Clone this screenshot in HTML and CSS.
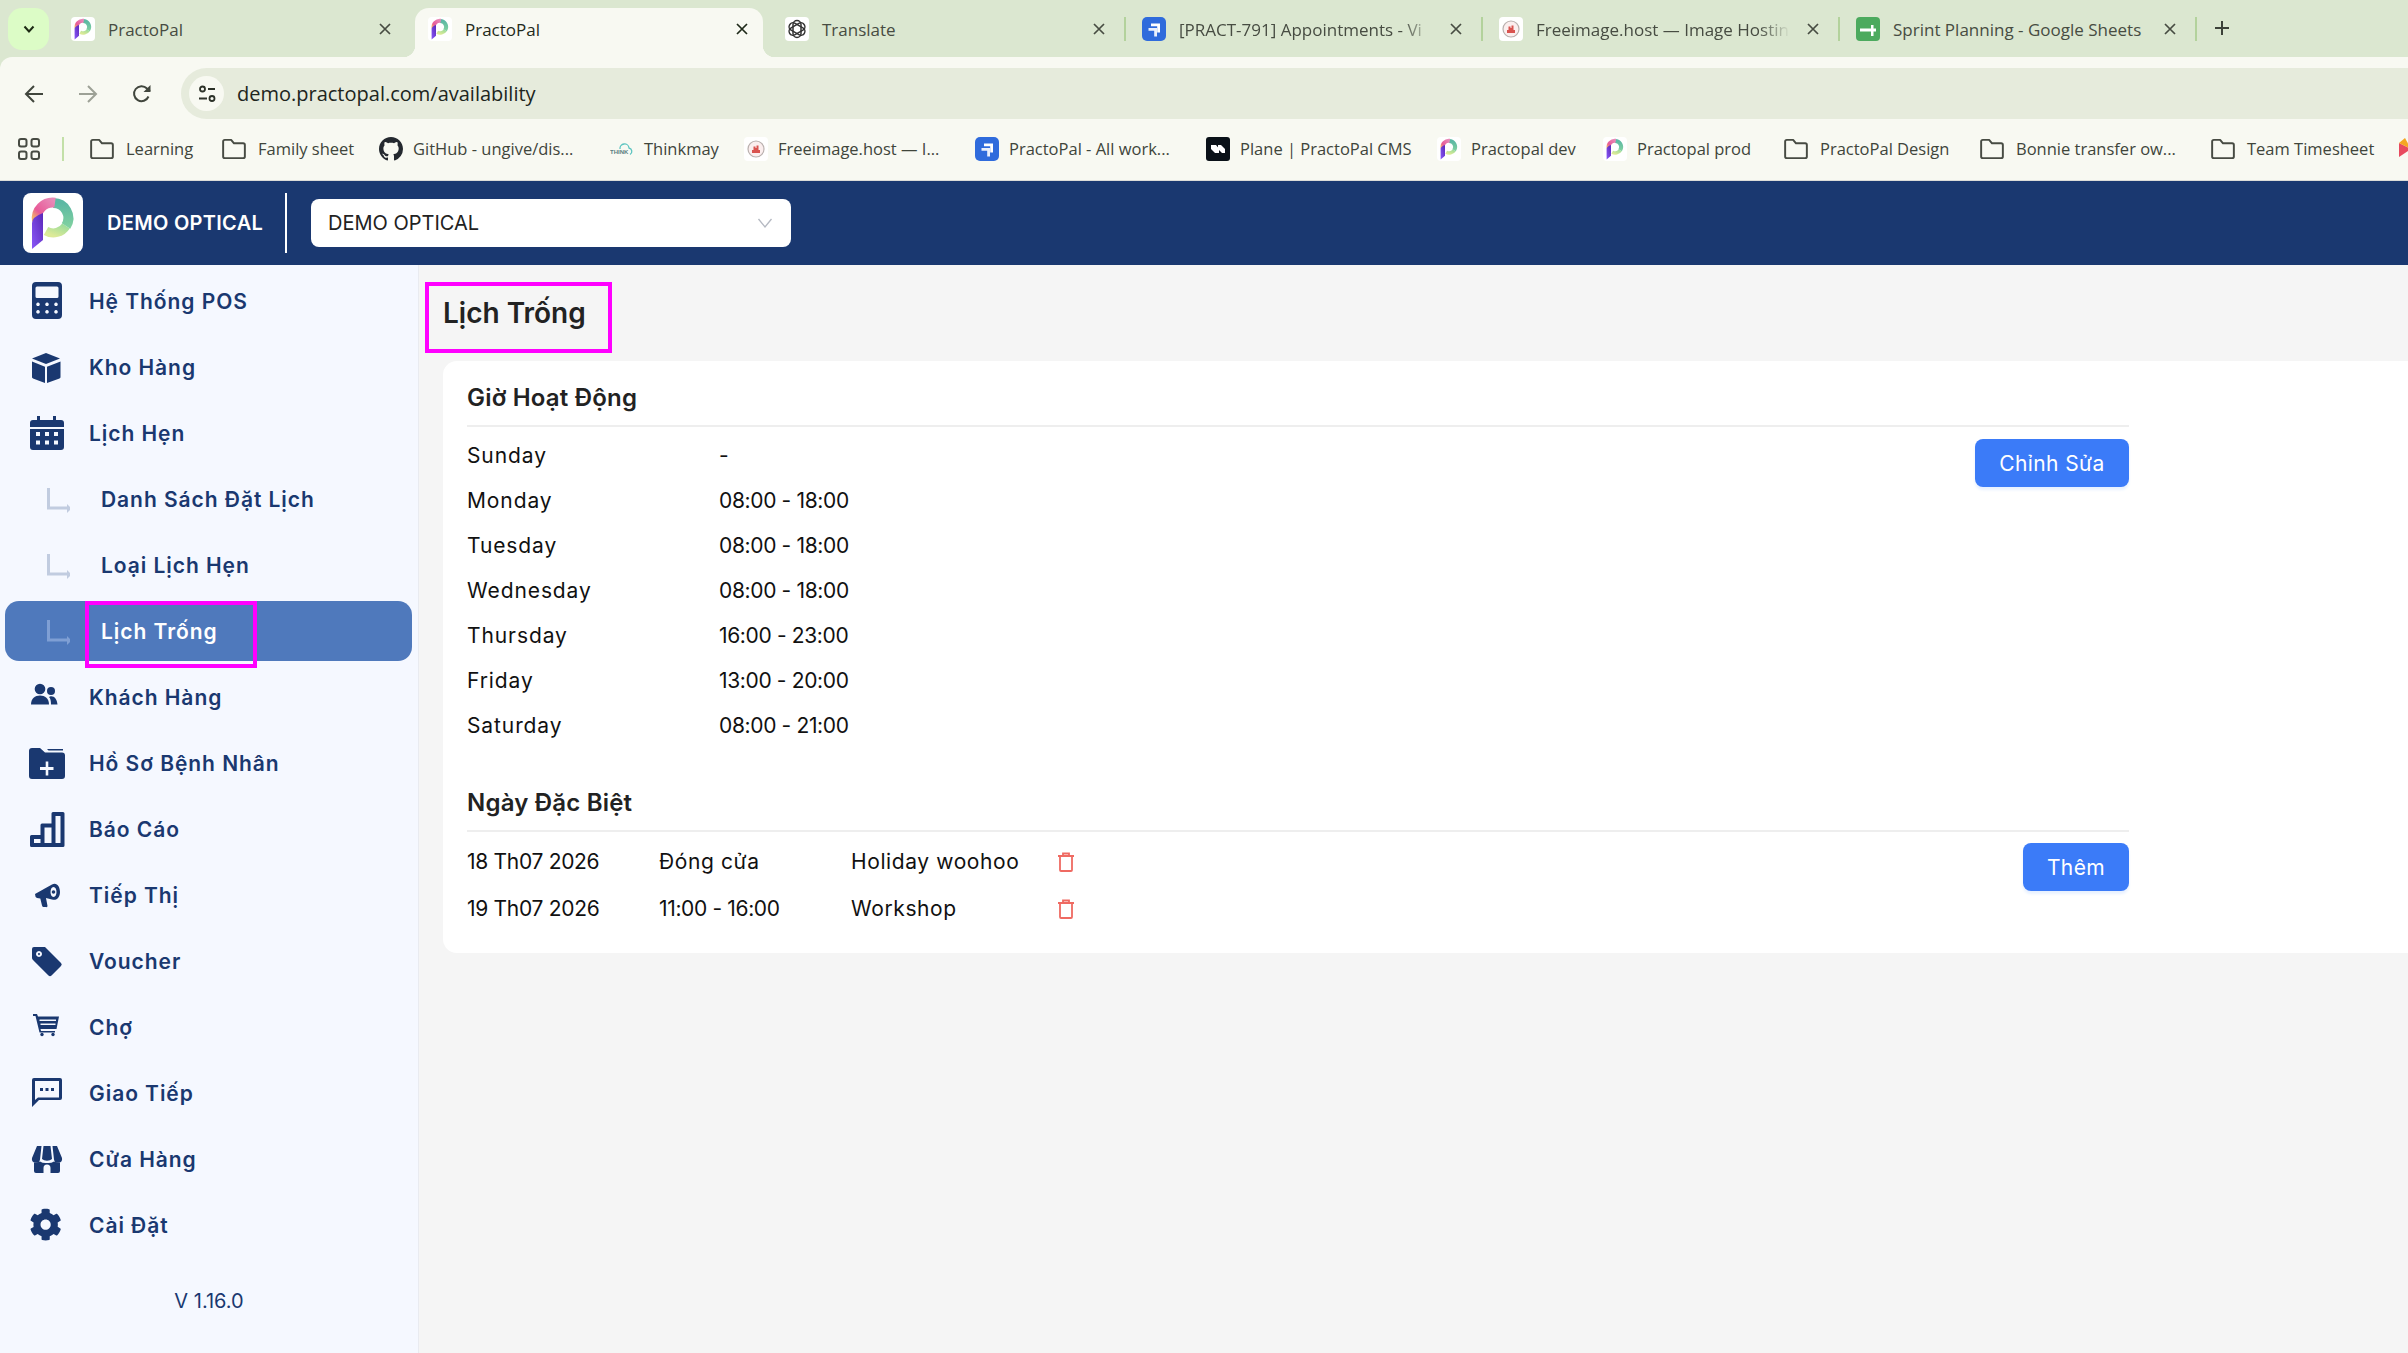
FILE: index.html
```html
<!DOCTYPE html>
<html lang="vi">
<head>
<meta charset="utf-8">
<title>PractoPal</title>
<link rel="stylesheet" href="styles.css">
</head>
<body>
<svg class="defs" width="0" height="0" aria-hidden="true">
  <defs>
    <linearGradient id="gPink" x1="0" y1="1" x2="1" y2="0"><stop offset="0" stop-color="#f3b06a"/><stop offset=".3" stop-color="#e85a98"/><stop offset="1" stop-color="#e88ab8"/></linearGradient>
    <linearGradient id="gTeal" x1="0" y1="0" x2="0" y2="1"><stop offset="0" stop-color="#5cb8a4"/><stop offset="1" stop-color="#7fd0a0"/></linearGradient>
    <linearGradient id="gLime" x1="1" y1="0" x2="0" y2="1"><stop offset="0" stop-color="#9ddc9a"/><stop offset="1" stop-color="#dcea98"/></linearGradient>
    <linearGradient id="gStem" x1="0" y1="1" x2="1" y2="0"><stop offset="0" stop-color="#8a58f8"/><stop offset="1" stop-color="#5a28b8"/></linearGradient>
    <symbol id="plogo" viewBox="0 0 60 60">
      <path d="M43 33A15 15 0 0 1 23 38" fill="none" stroke="url(#gLime)" stroke-width="9"/>
      <path d="M30 10A15 15 0 0 1 43 33" fill="none" stroke="url(#gTeal)" stroke-width="10"/>
      <path d="M14 28A16 16 0 0 1 32 9.6" fill="none" stroke="url(#gPink)" stroke-width="10"/>
      <path d="M9 56V30Q9 24 20 20V47Z" fill="url(#gStem)"/>
    </symbol>
    <symbol id="folder" viewBox="1.500 3.500 21 18">
      <path d="M2.500 6A1.500 1.500 0 0 1 4 4.500H9.500L12 7.500H20A1.500 1.500 0 0 1 21.500 9V19A1.500 1.500 0 0 1 20 20.500H4A1.500 1.500 0 0 1 2.500 19Z" fill="none" stroke="#474b43" stroke-width="1.700" stroke-linejoin="round"/>
    </symbol>
    <symbol id="jira" viewBox="0 0 24 24">
      <rect width="24" height="24" rx="5" fill="#2f6bdc"/>
      <path d="M9 6.500h9v9h-2.800V9.300H9Z" fill="#fff"/><path d="M6.500 11h8.500v8.500h-2.800v-5.700H6.500Z" fill="#fff" opacity=".9"/>
    </symbol>
    <symbol id="close" viewBox="0 0 14 14">
      <path d="M2 2L12 12M12 2L2 12" fill="none" stroke="currentColor" stroke-width="1.700"/>
    </symbol>
    <symbol id="arrow" viewBox="0 0 48 48">
      <path d="M26.500 13V33H46" fill="none" stroke="currentColor" stroke-width="3"/><path d="M45 29l4.500 4.500L45 38Z" fill="currentColor"/>
    </symbol>
    <symbol id="trash" viewBox="0 0 18 20">
      <path d="M1 4H17M6 4V1.500H12V4M3 4V18A1 1 0 0 0 4 19H14A1 1 0 0 0 15 18V4" fill="none" stroke="#ef6a62" stroke-width="1.800"/>
    </symbol>
  </defs>
</svg>

<div class="browser">
  <div class="tabstrip">
    <button class="tab-menu"><svg width="14" height="14" viewBox="0 0 14 14"><path d="M2.500 4.500L7 9.500l4.500-5" fill="none" stroke="#1d2a14" stroke-width="2"/></svg></button>
    <div class="tab"><span class="fav"><svg width="24" height="24"><use href="#plogo"/></svg></span><span class="tab-title">PractoPal</span><svg class="tab-x" width="14" height="14"><use href="#close"/></svg></div>
    <span class="tab-sep"></span>
    <div class="tab tab-active"><span class="fav"><svg width="24" height="24"><use href="#plogo"/></svg></span><span class="tab-title">PractoPal</span><svg class="tab-x" width="14" height="14"><use href="#close"/></svg></div>
    <span class="tab-sep"></span>
    <div class="tab"><span class="fav"><svg width="24" height="24" viewBox="0 0 24 24"><g fill="none" stroke="#333" stroke-width="1.500"><rect x="8" y="3.500" width="8" height="17" rx="4"/><rect x="8" y="3.500" width="8" height="17" rx="4" transform="rotate(60 12 12)"/><rect x="8" y="3.500" width="8" height="17" rx="4" transform="rotate(120 12 12)"/></g></svg></span><span class="tab-title">Translate</span><svg class="tab-x" width="14" height="14"><use href="#close"/></svg></div>
    <span class="tab-sep tab-sep-on"></span>
    <div class="tab"><svg class="fav-bare" width="24" height="24"><use href="#jira"/></svg><span class="tab-title tab-fade">[PRACT-791] Appointments - Vi</span><svg class="tab-x" width="14" height="14"><use href="#close"/></svg></div>
    <span class="tab-sep tab-sep-on"></span>
    <div class="tab"><span class="fav"><svg width="24" height="24" viewBox="0 0 24 24"><circle cx="12" cy="12" r="8" fill="#fbeeee" stroke="#b9b0ae" stroke-width="1.200"/><path d="M8 16h8v-3h-1.500V8.500h-2V11h-1V9.500H9.500V13H8Z" fill="#d9534f"/></svg></span><span class="tab-title tab-fade">Freeimage.host — Image Hostin</span><svg class="tab-x" width="14" height="14"><use href="#close"/></svg></div>
    <span class="tab-sep tab-sep-on"></span>
    <div class="tab"><svg class="fav-bare" width="24" height="24" viewBox="0 0 24 24"><rect width="24" height="24" rx="4" fill="#4caa5e"/><path d="M4 11.500h16v3H4ZM15 8h2.500v11H15Z" fill="#fff"/></svg><span class="tab-title">Sprint Planning - Google Sheets</span><svg class="tab-x" width="14" height="14"><use href="#close"/></svg></div>
    <span class="tab-sep tab-sep-on"></span>
    <svg class="tab-plus" width="16" height="16" viewBox="0 0 16 16"><path d="M8 1V15M1 8H15" fill="none" stroke="#3c4239" stroke-width="2"/></svg>
  </div>

  <div class="toolbar">
    <svg class="tool-ic" width="20" height="20" viewBox="0 0 20 20"><path d="M19 10H2M10 2l-8 8 8 8" fill="none" stroke="#41463d" stroke-width="2"/></svg>
    <svg class="tool-ic" width="20" height="20" viewBox="0 0 20 20"><path d="M1 10H18M10 2l8 8-8 8" fill="none" stroke="#9da196" stroke-width="2"/></svg>
    <svg class="tool-ic" width="20" height="20" viewBox="0 0 20 20"><path d="M16.500 12.500A7.500 7.500 0 1 1 15 4.500L18 7" fill="none" stroke="#41463d" stroke-width="2"/><path d="M18.500 1v7h-7Z" fill="#41463d"/></svg>
    <div class="omnibox">
      <span class="site-info"><svg width="20" height="20" viewBox="0 0 20 20"><g fill="none" stroke="#2c3128" stroke-width="1.800"><circle cx="5.500" cy="5" r="2.500"/><path d="M11 5h7M2 14.500h8"/><circle cx="15" cy="14.500" r="2.500"/></g></svg></span>
      <span class="url">demo.practopal.com/availability</span>
    </div>
  </div>

  <div class="bookmarks">
    <svg class="bm-apps" width="22" height="22" viewBox="0 0 22 22"><g fill="none" stroke="#474b43" stroke-width="2"><rect x="1" y="1" width="7.500" height="7.500" rx="2"/><rect x="13.500" y="1" width="7.500" height="7.500" rx="2"/><rect x="1" y="13.500" width="7.500" height="7.500" rx="2"/><rect x="13.500" y="13.500" width="7.500" height="7.500" rx="2"/></g></svg>
    <span class="bm-sep"></span>
    <div class="bm-list">
      <span class="bm bm-folder"><svg width="24" height="24"><use href="#folder"/></svg>Learning</span>
      <span class="bm bm-folder"><svg width="24" height="24"><use href="#folder"/></svg>Family sheet</span>
      <span class="bm"><svg width="24" height="24" viewBox="0 0 16 16"><path fill="#24292f" d="M8 0C3.580 0 0 3.580 0 8c0 3.540 2.290 6.530 5.470 7.590.4.070.55-.17.55-.38 0-.19-.01-.82-.01-1.490-2.010.37-2.530-.49-2.690-.94-.09-.23-.48-.94-.82-1.130-.28-.15-.68-.52-.01-.53.630-.01 1.080.58 1.230.82.720 1.210 1.870.87 2.330.66.070-.52.280-.87.510-1.070-1.780-.2-3.640-.89-3.640-3.950 0-.87.310-1.590.820-2.150-.08-.2-.36-1.020.08-2.120 0 0 .67-.21 2.200.82.640-.18 1.320-.27 2-.27s1.360.09 2 .27c1.530-1.040 2.200-.82 2.200-.82.440 1.100.160 1.920.080 2.120.510.560.820 1.270.820 2.150 0 3.070-1.870 3.750-3.650 3.950.290.250.540.730.540 1.480 0 1.070-.01 1.930-.01 2.200 0 .210.150.460.550.380A8.010 8.010 0 0 0 16 8c0-4.420-3.580-8-8-8Z"/></svg>GitHub - ungive/dis...</span>
      <span class="bm"><svg width="24" height="24" viewBox="0 0 24 24"><path d="M10 12a4.500 4.500 0 0 1 9-1 3.500 3.500 0 0 1 1 6.500" fill="none" stroke="#5cc4c0" stroke-width="1.300"/><text class="bm-think" x="0" y="17">THINK</text></svg>Thinkmay</span>
      <span class="bm"><span class="fav"><svg width="24" height="24" viewBox="0 0 24 24"><circle cx="12" cy="12" r="8" fill="#fbeeee" stroke="#b9b0ae" stroke-width="1.200"/><path d="M8 16h8v-3h-1.500V8.500h-2V11h-1V9.500H9.500V13H8Z" fill="#d9534f"/></svg></span>Freeimage.host — I...</span>
      <span class="bm"><svg width="24" height="24"><use href="#jira"/></svg>PractoPal - All work...</span>
      <span class="bm"><svg width="24" height="24" viewBox="0 0 24 24"><rect width="24" height="24" rx="3" fill="#0a1118"/><path d="M5 8h5l3 3.500V16H9l-4-4ZM12 8h3l4 4v4h-3l-4-4Z" fill="#fff"/></svg>Plane | PractoPal CMS</span>
      <span class="bm"><span class="fav"><svg width="24" height="24"><use href="#plogo"/></svg></span>Practopal dev</span>
      <span class="bm"><span class="fav"><svg width="24" height="24"><use href="#plogo"/></svg></span>Practopal prod</span>
      <span class="bm bm-folder"><svg width="24" height="24"><use href="#folder"/></svg>PractoPal Design</span>
      <span class="bm bm-folder"><svg width="24" height="24"><use href="#folder"/></svg>Bonnie transfer ow...</span>
      <span class="bm bm-folder"><svg width="24" height="24"><use href="#folder"/></svg>Team Timesheet</span>
      <span class="bm"><svg width="24" height="24" viewBox="0 0 24 24"><path d="M0 6l12 6-12 8Z" fill="#e84a5f"/><path d="M0 6l6-5 6 11Z" fill="#f5a623"/></svg></span>
    </div>
  </div>
</div>

<header class="app-header">
  <span class="logo"><svg width="60" height="60"><use href="#plogo"/></svg></span>
  <span class="brand">DEMO OPTICAL</span>
  <span class="divider"></span>
  <div class="select"><span class="select-text">DEMO OPTICAL</span><svg width="16" height="10" viewBox="0 0 16 10"><path d="M1.500 1L8 9l6.500-8" fill="none" stroke="#b5b9c2" stroke-width="1.300"/></svg></div>
</header>

<div class="app-body">
  <aside class="sidebar">
    <nav class="nav">
      <a class="nav-item"><svg class="nav-ic" width="48" height="48" viewBox="0 0 48 48"><path fill-rule="evenodd" d="M14 5H36A4 4 0 0 1 40 9V38A4 4 0 0 1 36 42H14A4 4 0 0 1 10 38V9A4 4 0 0 1 14 5ZM15 9.500A1.500 1.500 0 0 0 13.500 11V19.500A1.500 1.500 0 0 0 15 21H35A1.500 1.500 0 0 0 36.500 19.500V11A1.500 1.500 0 0 0 35 9.500ZM16 25.500a1.800 1.800 0 1 0 .01 0ZM25 25.500a1.800 1.800 0 1 0 .01 0ZM34 25.500a1.800 1.800 0 1 0 .01 0ZM16 33a1.800 1.800 0 1 0 .01 0ZM25 33a1.800 1.800 0 1 0 .01 0ZM34 33a1.800 1.800 0 1 0 .01 0Z"/></svg><span class="nav-label">Hệ Thống POS</span></a>
      <a class="nav-item"><svg class="nav-ic" width="48" height="48" viewBox="0 0 48 48"><path d="M24 10L38 15.500 24 21 10 15.500Z"/><path d="M10 18.500L23 23.700V40L11 35.500 10 34.500ZM38.500 18.500L25 23.700V40L37.500 35.500 38.500 34.500Z"/></svg><span class="nav-label">Kho Hàng</span></a>
      <a class="nav-item"><svg class="nav-ic" width="48" height="48" viewBox="0 0 48 48"><path fill-rule="evenodd" d="M15 7h3v4H31V7h3v4h5a3 3 0 0 1 3 3v4H8v-4a3 3 0 0 1 3-3h4ZM8 20H42V38a3 3 0 0 1-3 3H11a3 3 0 0 1-3-3ZM14 23v4h4v-4ZM23 23v4h4v-4ZM32 23v4h4v-4ZM14 31.500v4h4v-4ZM23 31.500v4h4v-4ZM32 31.500v4h4v-4Z"/></svg><span class="nav-label">Lịch Hẹn</span></a>
      <a class="nav-item nav-sub"><svg class="nav-ic" width="48" height="48"><use href="#arrow"/></svg><span class="nav-label">Danh Sách Đặt Lịch</span></a>
      <a class="nav-item nav-sub"><svg class="nav-ic" width="48" height="48"><use href="#arrow"/></svg><span class="nav-label">Loại Lịch Hẹn</span></a>
      <a class="nav-item nav-sub nav-active"><svg class="nav-ic" width="48" height="48"><use href="#arrow"/></svg><span class="nav-label">Lịch Trống</span><span class="mark-nav"></span></a>
      <a class="nav-item"><svg class="nav-ic" width="48" height="48" viewBox="0 0 48 48"><circle cx="18" cy="16" r="5.300"/><path d="M9 31.500C9 25.500 13 22.500 18 22.500S27 25.500 27 31.500Z"/><circle cx="29" cy="18" r="4"/><path d="M28 23.500C32 22.500 35 26 35.500 31.500H29C29 28 28.500 25.500 27 24Z"/></svg><span class="nav-label">Khách Hàng</span></a>
      <a class="nav-item"><svg class="nav-ic" width="48" height="48" viewBox="0 0 48 48"><path fill-rule="evenodd" d="M7 12A3 3 0 0 1 10 9H18L23 13.500H40A3 3 0 0 1 43 16.500V37A3 3 0 0 1 40 40H10A3 3 0 0 1 7 37ZM23.700 22.500V28H18V31H23.700V36.500H26.300V31H31.500V28H26.300V22.500Z"/><path d="M25 10H41V11.500H26.500Z"/></svg><span class="nav-label">Hồ Sơ Bệnh Nhân</span></a>
      <a class="nav-item"><svg class="nav-ic" width="48" height="48" viewBox="0 0 48 48"><path fill-rule="evenodd" d="M31 7H41A1.500 1.500 0 0 1 42.500 8.500V40.500A1.500 1.500 0 0 1 41 42H9.500A1.500 1.500 0 0 1 8 40.500V31.500A1.500 1.500 0 0 1 9.500 30H18.500V20A1.500 1.500 0 0 1 20 18.500H29.500V8.500A1.500 1.500 0 0 1 31 7ZM33.500 11V38H38.500V11ZM22.500 22.500V38H29.500V22.500ZM12 34V38H18.500V34Z"/></svg><span class="nav-label">Báo Cáo</span></a>
      <a class="nav-item"><svg class="nav-ic" width="48" height="48" viewBox="0 0 48 48"><path fill-rule="evenodd" d="M13 23L30 13.500C35 11 38 16 38 21S35 30 30 28.500L24 27 25.500 35Q25.500 36.500 24 36H21.500Q20.500 36 20 34.500L18.300 27.500 15 27Q13 26 13 23ZM31.500 16C29.500 16 28.500 18.500 28.500 21S29.500 26 31.500 26 34.500 23.500 34.500 21 33.500 16 31.500 16Z"/><circle cx="31.500" cy="21" r="1.800"/></svg><span class="nav-label">Tiếp Thị</span></a>
      <a class="nav-item"><svg class="nav-ic" width="48" height="48" viewBox="0 0 48 48"><path fill-rule="evenodd" d="M12 10H23L39 26Q40.500 27.500 39 29L29.500 38.500Q28 40 26.500 38.500L11 23Q10 22 10 21V12Q10 10 12 10ZM17 14a3 3 0 1 0 .01 0ZM17 16a1 1 0 1 1-.01 0Z"/></svg><span class="nav-label">Voucher</span></a>
      <a class="nav-item"><svg class="nav-ic" width="48" height="48" viewBox="0 0 48 48"><path fill-rule="evenodd" d="M11 11H15L16 13.500H37L34.500 26H18.500L19 28H33V29.500H17.500L13.500 13H11ZM17.500 16.500V18H34V16.500ZM18.500 20.500V22H33.500V20.500Z"/><circle cx="20" cy="31.500" r="1.700"/><circle cx="31" cy="31.500" r="1.700"/></svg><span class="nav-label">Chợ</span></a>
      <a class="nav-item"><svg class="nav-ic" width="48" height="48" viewBox="0 0 48 48"><path fill-rule="evenodd" d="M12 9H38A2 2 0 0 1 40 11V29A2 2 0 0 1 38 31H17L10 38V11A2 2 0 0 1 12 9ZM13 12V31L16 28.500H37V12Z"/><rect x="18" y="19" width="3" height="3"/><rect x="23.500" y="19" width="3" height="3"/><rect x="29" y="19" width="3" height="3"/></svg><span class="nav-label">Giao Tiếp</span></a>
      <a class="nav-item"><svg class="nav-ic" width="48" height="48" viewBox="0 0 48 48"><path d="M15 11H19.500L18 24.500A4 4 0 0 1 10 23ZM21.500 11H28.500L30 24A6 4 0 0 1 20 24ZM30.500 11H35L40 23A4 4 0 0 1 32 24.500Z"/><path fill-rule="evenodd" d="M12 27.500Q15 28 18 26.500 21 28.500 25 28 29 28.500 32 26.500 35 28 38 27.500V36A2 2 0 0 1 36 38H14A2 2 0 0 1 12 36ZM21.500 38H28.500V33A3.500 3.500 0 0 0 21.500 33Z"/></svg><span class="nav-label">Cửa Hàng</span></a>
      <a class="nav-item"><svg class="nav-ic" width="48" height="48" viewBox="0 0 512 512"><path transform="translate(78 78) scale(.68)" d="M487.400 315.700l-42.600-24.600c4.300-23.200 4.300-47 0-70.200l42.600-24.600c4.900-2.800 7.100-8.600 5.500-14-11.100-35.600-30-67.800-54.700-94.600-3.800-4.100-10-5.100-14.800-2.300L380.800 110c-17.900-15.400-38.500-27.300-60.800-35.100V25.800c0-5.600-3.900-10.500-9.400-11.700-36.700-8.200-74.300-7.800-109.200 0-5.500 1.200-9.400 6.100-9.400 11.700V75c-22.200 7.900-42.800 19.800-60.800 35.100L88.700 85.500c-4.900-2.800-11-1.900-14.800 2.300-24.700 26.700-43.600 58.900-54.700 94.600-1.700 5.400.6 11.200 5.500 14L67.300 221c-4.300 23.200-4.300 47 0 70.200l-42.600 24.600c-4.900 2.800-7.100 8.600-5.500 14 11.100 35.600 30 67.800 54.700 94.600 3.800 4.100 10 5.100 14.800 2.300l42.600-24.600c17.900 15.400 38.500 27.300 60.800 35.100v49.200c0 5.600 3.900 10.500 9.400 11.700 36.700 8.200 74.300 7.800 109.200 0 5.500-1.200 9.400-6.100 9.400-11.700v-49.200c22.200-7.900 42.800-19.800 60.800-35.100l42.600 24.600c4.900 2.800 11 1.900 14.800-2.300 24.700-26.700 43.600-58.900 54.700-94.600 1.500-5.500-.7-11.300-5.600-14.100zM256 336c-44.100 0-80-35.900-80-80s35.900-80 80-80 80 35.900 80 80-35.900 80-80 80z"/></svg><span class="nav-label">Cài Đặt</span></a>
    </nav>
    <div class="version">V 1.16.0</div>
  </aside>

  <main class="main">
    <div class="title-box"><h1 class="page-title">Lịch Trống</h1></div>
    <section class="card">
      <div class="card-inner">
        <h2 class="section-title">Giờ Hoạt Động</h2>
        <div class="section-body">
          <div class="hours">
            <div class="hours-row"><span class="day">Sunday</span><span class="time">-</span></div>
            <div class="hours-row"><span class="day">Monday</span><span class="time">08:00 - 18:00</span></div>
            <div class="hours-row"><span class="day">Tuesday</span><span class="time">08:00 - 18:00</span></div>
            <div class="hours-row"><span class="day">Wednesday</span><span class="time">08:00 - 18:00</span></div>
            <div class="hours-row"><span class="day">Thursday</span><span class="time">16:00 - 23:00</span></div>
            <div class="hours-row"><span class="day">Friday</span><span class="time">13:00 - 20:00</span></div>
            <div class="hours-row"><span class="day">Saturday</span><span class="time">08:00 - 21:00</span></div>
          </div>
          <button class="btn btn-edit">Chỉnh Sửa</button>
        </div>
        <h2 class="section-title section-second">Ngày Đặc Biệt</h2>
        <div class="section-body">
          <div class="special">
            <div class="special-row"><span class="sp-date">18 Th07 2026</span><span class="sp-word">Đóng cửa</span><span class="sp-word">Holiday woohoo</span><svg width="18" height="20"><use href="#trash"/></svg></div>
            <div class="special-row"><span class="sp-date">19 Th07 2026</span><span class="time">11:00 - 16:00</span><span class="sp-word">Workshop</span><svg width="18" height="20"><use href="#trash"/></svg></div>
          </div>
          <button class="btn btn-add">Thêm</button>
        </div>
      </div>
    </section>
  </main>
</div>
</body>
</html>
```
FILE: styles.css
```css
* { box-sizing: border-box; }
html, body { margin: 0; height: 100%; overflow: hidden; }
body {
  display: flex;
  flex-direction: column;
  background: #dbe7d0;
  font-family: "Inter", "Noto Sans", sans-serif;
  color: #111;
}
.defs { position: absolute; }

/* browser chrome */
.browser { font-family: "Open Sans", "Noto Sans", sans-serif; flex: none; }
.tabstrip {
  height: 57px;
  display: flex;
  align-items: flex-end;
  padding-left: 8px;
  background: #dbe7d0;
}
.tab-menu {
  width: 41px;
  height: 42px;
  margin: 0 9px 7px 0;
  padding: 0;
  border: 0;
  border-radius: 14px;
  background: #dcfcc6;
  display: flex;
  align-items: center;
  justify-content: center;
}
.tab {
  position: relative;
  width: 348px;
  height: 49px;
  flex: none;
  display: flex;
  align-items: center;
  padding: 0 14px 7px 13px;
  font-size: 17px;
  color: #474c42;
  border-radius: 14px 14px 0 0;
}
.tab-active { background: #f8f9f2; color: #1f2a1a; }
.tab-active::before, .tab-active::after {
  content: "";
  position: absolute;
  bottom: 0;
  width: 12px;
  height: 12px;
}
.tab-active::before { left: -12px; background: radial-gradient(circle at 0 0, transparent 12px, #f8f9f2 12.500px); }
.tab-active::after { right: -12px; background: radial-gradient(circle at 100% 0, transparent 12px, #f8f9f2 12.500px); }
.fav {
  width: 24px;
  height: 24px;
  flex: none;
  background: #fff;
  border-radius: 4px;
  display: block;
}
.fav svg { display: block; }
.fav-bare { flex: none; }
.tab-title {
  flex: 1;
  min-width: 0;
  margin: 0 16px 0 13px;
  white-space: nowrap;
}
.tab-fade { -webkit-mask-image: linear-gradient(90deg, #000 88%, transparent 100%); mask-image: linear-gradient(90deg, #000 88%, transparent 100%); }
.tab-x { flex: none; color: #474c42; }
.tab-active .tab-x { color: #1f2a1a; }
.tab-sep {
  width: 9px;
  height: 49px;
  flex: none;
  padding: 9px 3.500px 16px;
}
.tab-sep-on::before { content: ""; display: block; width: 2px; height: 100%; background: #b3d29c; }
.tab-plus { margin: 0 0 21px 14px; flex: none; }

.toolbar {
  height: 62px;
  display: flex;
  align-items: flex-end;
  background: #f8f9f2;
  padding-left: 24px;
  border-top-left-radius: 12px;
}
.tool-ic { flex: none; margin: 0 34px 15px 0; }
.omnibox {
  flex: 1;
  height: 51px;
  margin-left: -5px;
  display: flex;
  align-items: center;
  padding-left: 8px;
  background: #e6ebdc;
  border-radius: 26px 0 0 26px;
}
.site-info {
  width: 35px;
  height: 35px;
  border-radius: 50%;
  background: #f8f9f2;
  display: flex;
  align-items: center;
  justify-content: center;
  margin-right: 13px;
}
.url { font-size: 20px; color: #20251c; }

.bookmarks {
  height: 62px;
  display: flex;
  align-items: center;
  padding: 0 0 2px 18px;
  background: #f8f9f2;
  border-bottom: 1px solid #dcdcd8;
}
.bm-apps { flex: none; }
.bm-sep { width: 2px; height: 24px; background: #c3e0a8; margin: 0 25px 0 22px; flex: none; }
.bm-list {
  display: grid;
  grid-template-columns: 132px 159px 231px 134px 231px 231px 231px 166px 179px 196px 231px 190px 30px;
  align-items: center;
  margin-left: -1px;
}
.bm {
  display: flex;
  align-items: center;
  gap: 10px;
  font-size: 16.500px;
  color: #40453b;
  white-space: nowrap;
}
.bm svg { flex: none; display: block; }
.bm-folder { gap: 12px; }
.bm-folder svg { margin-left: 2px; }
.bm-think { font-family: "Liberation Sans", sans-serif; font-size: 6px; font-weight: 700; fill: #5b7f80; }

/* app header */
.app-header {
  height: 84px;
  flex: none;
  display: flex;
  align-items: center;
  padding-left: 23px;
  background: #1a3870;
}
.logo { width: 60px; height: 60px; background: #fff; border-radius: 8px; flex: none; }
.logo svg { display: block; }
.brand { margin-left: 24px; width: 178px; font-size: 20px; font-weight: 600; color: #fff; letter-spacing: .3px; white-space: nowrap; }
.divider { width: 2px; height: 60px; background: #fff; flex: none; }
.select {
  width: 480px;
  height: 48px;
  margin-left: 24px;
  padding: 0 18px 0 17px;
  display: flex;
  align-items: center;
  justify-content: space-between;
  background: #fff;
  border-radius: 8px;
}
.select-text { font-size: 20px; color: #222; }

/* layout */
.app-body { flex: 1; min-height: 0; display: flex; }

.sidebar {
  width: 419px;
  flex: none;
  background: #f5f8ff;
  border-right: 1px solid #e9ebf0;
  padding-top: 6px;
}
.nav { display: flex; flex-direction: column; gap: 6px; }
.nav-item {
  position: relative;
  height: 60px;
  width: 407px;
  margin-left: 5px;
  padding-left: 17px;
  display: flex;
  align-items: center;
  border-radius: 14px;
  color: #1a3870;
}
.nav-ic { flex: none; fill: #1a3870; color: #c1cce0; }
.nav-label { margin-left: 19px; font-size: 21px; font-weight: 600; letter-spacing: .95px; white-space: nowrap; }
.nav-sub .nav-label { margin-left: 31px; }
.nav-active { background: #4f79bc; color: #fff; }
.nav-active .nav-ic { color: #7f9fd4; }
.mark-nav {
  position: absolute;
  left: 80px;
  top: 0;
  width: 172px;
  height: 67px;
  border: 4px solid #ff00ff;
}
.version { margin-top: 31px; height: 30px; line-height: 30px; text-align: center; font-size: 20px; color: #1a3870; }

.main { flex: 1; min-width: 0; background: #f5f5f5; padding: 17px 0 0 6px; }
.title-box {
  width: 187px;
  height: 71px;
  border: 4px solid #ff00ff;
  padding: 0 0 0 14px;
  display: flex;
  align-items: center;
}
.page-title { margin: 0 0 10px; font-size: 28px; line-height: 40px; font-weight: 600; color: #222; white-space: nowrap; }
.card {
  margin: 8px 0 0 18px;
  padding: 16px 24px 21px;
  background: #fff;
  border-radius: 14px 0 0 14px;
}
.card-inner { width: 1662px; }
.section-title {
  margin: 0;
  height: 50px;
  padding-bottom: 7px;
  border-bottom: 2px solid #eeeeee;
  font-size: 24px;
  line-height: 42px;
  font-weight: 600;
  color: #222;
  letter-spacing: .2px;
}
.section-second { margin-top: 34px; }
.section-body { display: flex; justify-content: space-between; align-items: flex-start; padding-top: 6px; }
.hours-row {
  height: 45px;
  display: grid;
  grid-template-columns: 252px 1fr;
  align-items: center;
  font-size: 21px;
}
.day { letter-spacing: .9px; }
.time { letter-spacing: -.35px; }
.special-row {
  height: 47px;
  display: grid;
  grid-template-columns: 192px 192px 206px 18px;
  align-items: center;
  font-size: 21px;
  white-space: nowrap;
}
.sp-date { letter-spacing: -.3px; }
.sp-word { letter-spacing: .6px; }
.btn {
  height: 48px;
  border: 0;
  border-radius: 8px;
  background: #3b7bf8;
  color: #fff;
  font-family: inherit;
  font-size: 21px;
  letter-spacing: .4px;
  box-shadow: 0 3px 3px #e8f1ff;
}
.btn-edit { width: 154px; margin-top: 6px; }
.btn-add { width: 106px; margin-top: 5px; }
```
